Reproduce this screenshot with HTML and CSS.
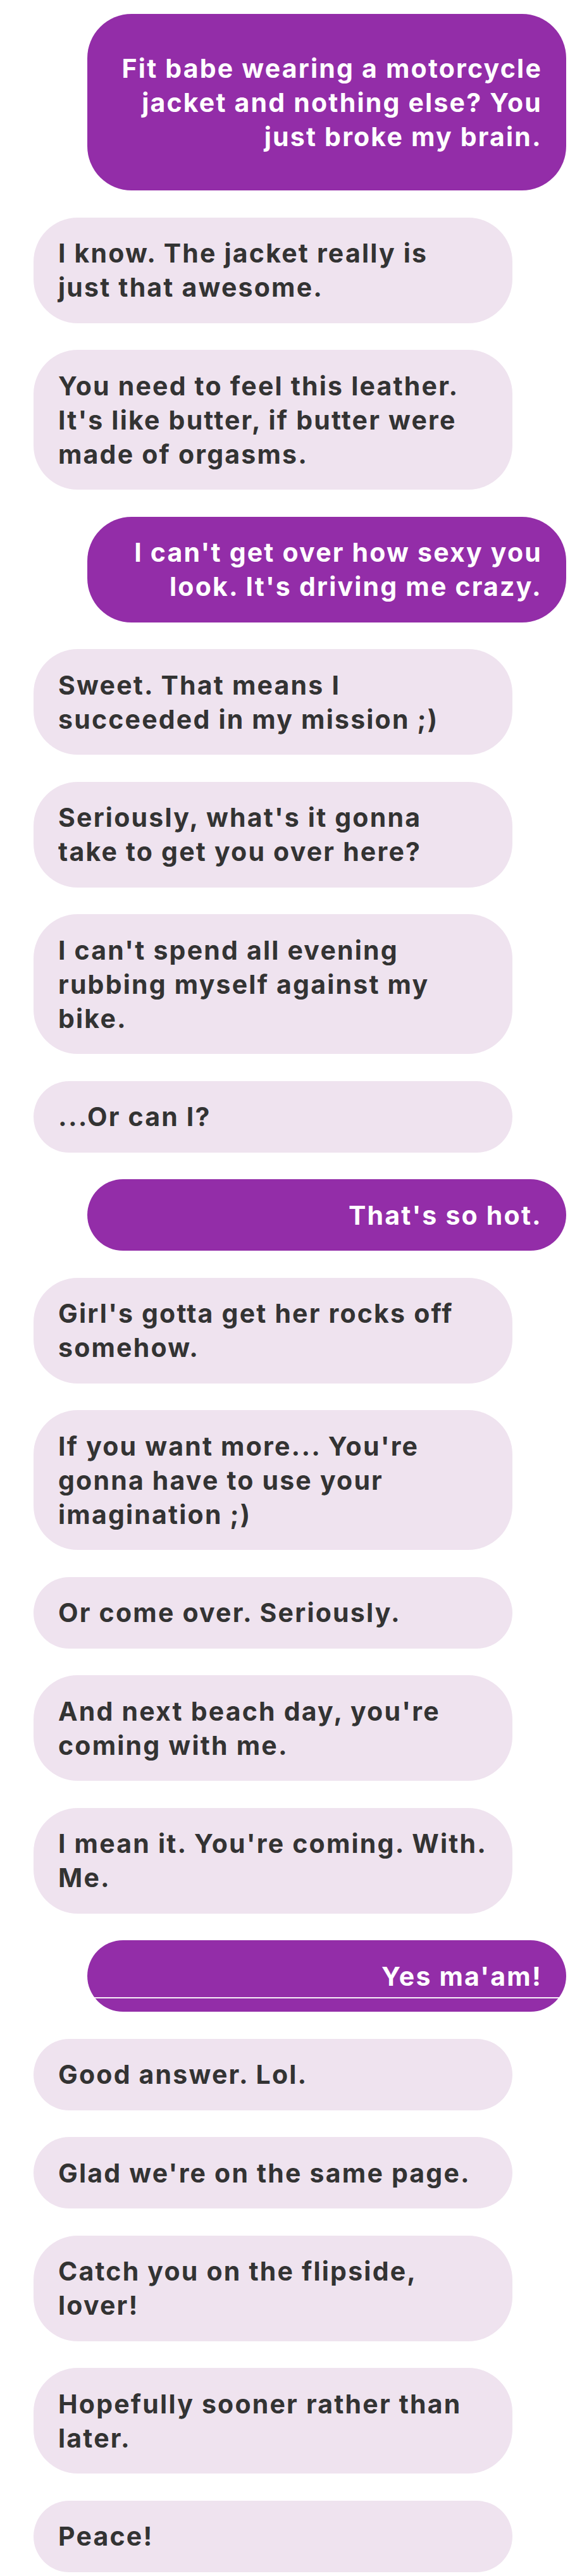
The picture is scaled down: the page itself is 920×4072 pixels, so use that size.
FILE: index.html
```html
<!DOCTYPE html>
<html lang="en">
<head>
<meta charset="utf-8">
<title>Chat</title>
<link rel="stylesheet" href="styles.css">
</head>
<body>
<main class="chat">
  <p class="msg msg--out msg--lead">Fit babe wearing a motorcycle<br>jacket and nothing else? You<br>just broke my brain.</p>
  <p class="msg msg--in">I know. The jacket really is<br>just that awesome.</p>
  <p class="msg msg--in">You need to feel this leather.<br>It's like butter, if butter were<br>made of orgasms.</p>
  <p class="msg msg--out">I can't get over how sexy you<br>look. It's driving me crazy.</p>
  <p class="msg msg--in">Sweet. That means I<br>succeeded in my mission ;)</p>
  <p class="msg msg--in">Seriously, what's it gonna<br>take to get you over here?</p>
  <p class="msg msg--in">I can't spend all evening<br>rubbing myself against my<br>bike.</p>
  <p class="msg msg--in">...Or can I?</p>
  <p class="msg msg--out">That's so hot.</p>
  <p class="msg msg--in">Girl's gotta get her rocks off<br>somehow.</p>
  <p class="msg msg--in">If you want more... You're<br>gonna have to use your<br>imagination ;)</p>
  <p class="msg msg--in">Or come over. Seriously.</p>
  <p class="msg msg--in">And next beach day, you're<br>coming with me.</p>
  <p class="msg msg--in">I mean it. You're coming. With.<br>Me.</p>
  <p class="msg msg--out msg--ruled">Yes ma'am!</p>
  <p class="msg msg--in">Good answer. Lol.</p>
  <p class="msg msg--in">Glad we're on the same page.</p>
  <p class="msg msg--in">Catch you on the flipside,<br>lover!</p>
  <p class="msg msg--in">Hopefully sooner rather than<br>later.</p>
  <p class="msg msg--in">Peace!</p>
</main>
</body>
</html>
```

FILE: styles.css
```css
html, body {
  margin: 0;
  padding: 0;
  background: #ffffff;
}

.chat {
  display: flex;
  flex-direction: column;
  gap: 42.5px;
  padding: 22px 0 0;
  font-family: Inter, "Open Sans", sans-serif;
  font-weight: 700;
  font-size: 41px;
  line-height: 54px;
  letter-spacing: 2.2px;
}

.msg {
  margin: 0;
  width: 757px;
  box-sizing: border-box;
  border-radius: 70px;
  padding-top: 29.5px;
  padding-bottom: 29.5px;
  white-space: nowrap;
}

.msg--in {
  align-self: flex-start;
  margin-left: 53px;
  background: #efe3ef;
  color: #333333;
  padding-left: 39px;
  padding-right: 10px;
  text-align: left;
}

.msg--out {
  align-self: flex-start;
  margin-left: 138px;
  background: #932da8;
  color: #ffffff;
  padding-right: 38px;
  padding-left: 10px;
  text-align: right;
}

.msg--lead {
  padding-top: 58.5px;
  padding-bottom: 58.5px;
}

.msg--ruled {
  background: linear-gradient(to bottom,
    #932da8 0, #932da8 90px,
    #f6eef8 90px, #f6eef8 92px,
    #932da8 92px, #932da8 100%);
}
```
